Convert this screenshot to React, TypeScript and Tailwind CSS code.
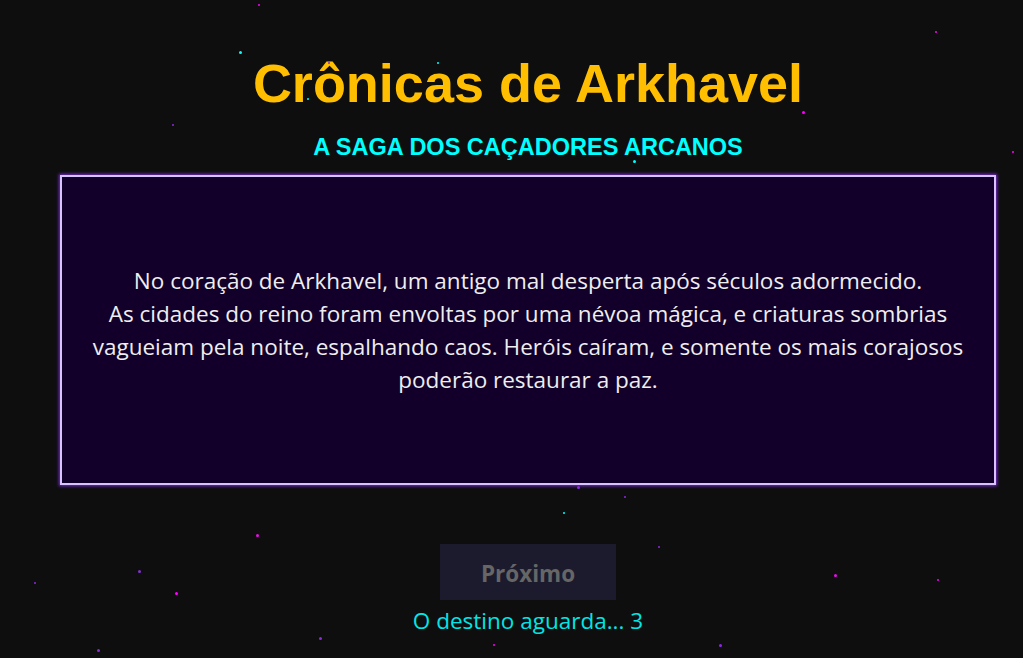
import React from "react";

type Star = { x: number; y: number; s: number; c: string };

const stars: Star[] = [
  { x: 259, y: 5, s: 2, c: "#ff00ff" },
  { x: 240, y: 52, s: 3, c: "#00ffff" },
  { x: 329, y: 63, s: 2, c: "#8a2be2" },
  { x: 438, y: 63, s: 2, c: "#00ffff" },
  { x: 308, y: 99, s: 2, c: "#00ffff" },
  { x: 173, y: 125, s: 2, c: "#8a2be2" },
  { x: 936, y: 32, s: 2, c: "#ff00ff" },
  { x: 803, y: 112, s: 3, c: "#ff00ff" },
  { x: 1013, y: 152, s: 2, c: "#ff00ff" },
  { x: 634, y: 161, s: 3, c: "#00ffff" },
  { x: 578, y: 487, s: 3, c: "#8a2be2" },
  { x: 625, y: 497, s: 2, c: "#8a2be2" },
  { x: 564, y: 513, s: 2, c: "#00ffff" },
  { x: 659, y: 547, s: 2, c: "#8a2be2" },
  { x: 835, y: 575, s: 3, c: "#ff00ff" },
  { x: 720, y: 645, s: 3, c: "#8a2be2" },
  { x: 257, y: 535, s: 3, c: "#ff00ff" },
  { x: 139, y: 571, s: 3, c: "#8a2be2" },
  { x: 35, y: 583, s: 2, c: "#8a2be2" },
  { x: 176, y: 593, s: 3, c: "#ff00ff" },
  { x: 320, y: 638, s: 3, c: "#8a2be2" },
  { x: 98, y: 650, s: 3, c: "#8a2be2" },
  { x: 938, y: 580, s: 2, c: "#ff00ff" },
  { x: 494, y: 645, s: 2, c: "#ff00ff" },
];

export default function App() {
  return (
    <div className="relative w-full h-[658px] overflow-hidden bg-[#0e0e0e] font-['Open_Sans','Noto_Sans',sans-serif]">
      <div className="relative z-10 flex flex-col items-center pl-[60px] pr-[27px] pt-[52px]">
        <h1 className="text-[54px] leading-[62px] font-bold text-[#ffbf00] whitespace-nowrap font-['Liberation_Sans',Arial,sans-serif]">
          Crônicas de Arkhavel
        </h1>
        <h2 className="mt-[20px] text-[23.5px] leading-[27px] font-bold text-[#00ffff] whitespace-nowrap font-['Liberation_Sans',Arial,sans-serif]">
          A SAGA DOS CAÇADORES ARCANOS
        </h2>
        <div className="mt-[14px] w-full h-[310px] flex items-center justify-center border-2 border-[#d9c2ff] bg-[#12002b] shadow-[0_0_3px_1px_#7b2fd6]">
          <p className="text-center text-[22.5px] leading-[33px] text-[#eeeeee] whitespace-nowrap">
            No coração de Arkhavel, um antigo mal desperta após séculos adormecido.
            <br />
            As cidades do reino foram envoltas por uma névoa mágica, e criaturas sombrias
            <br />
            vagueiam pela noite, espalhando caos. Heróis caíram, e somente os mais corajosos
            <br />
            poderão restaurar a paz.
          </p>
        </div>
        <button className="mt-[59px] w-[176px] h-[56px] pt-[3px] bg-[#1b1b2d] text-[#666666] text-[22.5px] font-bold">
          Próximo
        </button>
        <div className="mt-[5px] text-[22.5px] leading-[32px] text-[#00e6e6]">
          O destino aguarda... 3
        </div>
      </div>
      {stars.map((st, i) => (
        <span
          key={i}
          className="absolute rounded-full z-20"
          style={{
            left: st.x - st.s / 2,
            top: st.y - st.s / 2,
            width: st.s,
            height: st.s,
            background: st.c,
          }}
        />
      ))}
    </div>
  );
}
